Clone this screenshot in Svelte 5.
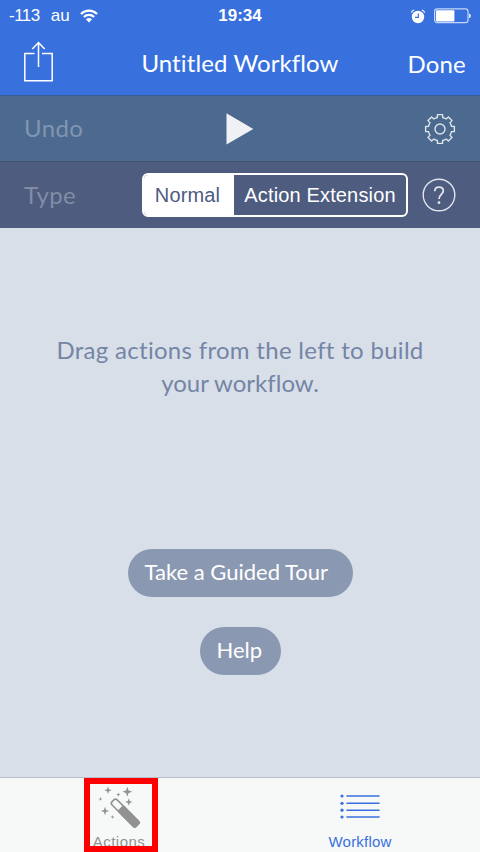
<script>
  let mode = 'Normal';
  const modes = ['Normal', 'Action Extension'];

  // outline of the settings cog, eight teeth around the centre
  const point = (r, deg) => {
    const a = (deg * Math.PI) / 180;
    return `${(16 + r * Math.cos(a)).toFixed(2)} ${(16 + r * Math.sin(a)).toFixed(2)}`;
  };

  let gear = '';
  for (let i = 0; i < 8; i++) {
    const a = i * 45;
    gear += `${i ? 'L' : 'M'}${point(11.8, a - 13)} L${point(14.6, a - 10)} L${point(14.6, a + 10)} L${point(11.8, a + 13)} A11.8 11.8 0 0 1 ${point(11.8, a + 32)} `;
  }
  gear += 'Z';

  // four-pointed stars around the wand: x, y, radius
  const stars = [
    [12, 5.2, 3.7],
    [31.3, 6.8, 5],
    [22.3, 9.6, 2.1],
    [4.4, 14, 2.1],
    [32.8, 17, 3.7],
    [9, 26, 4.3],
    [16.4, 32, 2.1],
  ];

  function star([x, y, r]) {
    const k = r * 0.26;
    return `M${x} ${y - r}L${x + k} ${y - k}L${x + r} ${y}L${x + k} ${y + k}L${x} ${y + r}L${x - k} ${y + k}L${x - r} ${y}L${x - k} ${y - k}Z`;
  }
</script>

<div class="screen">
  <header>
    <div class="status">
      <div class="carrier">
        <span class="signal">-113</span>
        <span class="network">au</span>
        <svg width="18" height="14" viewBox="0 0 20 15">
          <g fill="none" stroke="#fff" stroke-width="2.5">
            <path d="M1.1 5.2C6 .4 14 .4 18.9 5.2" />
            <path d="M4.3 8.6C7.5 5.5 12.5 5.5 15.7 8.6" />
          </g>
          <path d="M6.6 11Q10 8.2 13.4 11L10 14.6Z" fill="#fff" />
        </svg>
      </div>
      <span class="time">19:34</span>
      <div class="power">
        <svg width="16" height="15" viewBox="0 0 16 15">
          <circle cx="8" cy="8" r="6.2" fill="#fff" />
          <path d="M1.3 3.6Q2 1.5 4.2 1M14.7 3.6Q14 1.5 11.8 1" fill="none" stroke="#fff" stroke-width="1.2" />
          <path d="M8.3 4.5V8.3H5" fill="none" stroke="#3871de" stroke-width="1.2" />
        </svg>
        <svg width="38" height="16" viewBox="0 0 38 16">
          <rect x=".6" y=".9" width="33.4" height="13.8" rx="2.6" fill="none" stroke="#c5d6f6" stroke-width="1.2" />
          <rect x="2" y="2.2" width="18.4" height="11.2" rx="1" fill="#fff" />
          <path d="M35 5.4q2 .6 2 2.4t-2 2.4Z" fill="#dce7fb" />
        </svg>
      </div>
    </div>
    <nav>
      <button class="share" aria-label="Share">
        <svg width="30" height="42" viewBox="0 0 30 42" fill="none" stroke="#fff" stroke-width="1.5">
          <path d="M10.5 12.5H.8V39.8H28.2V12.5H18" />
          <path d="M14.5 26V1.8M8.3 8L14.5 1.6L20.7 8" />
        </svg>
      </button>
      <h1>Untitled Workflow</h1>
      <button class="done">Done</button>
    </nav>
  </header>

  <div class="bar toolbar">
    <span class="label undo">Undo</span>
    <svg class="play" width="28" height="32" viewBox="0 0 28 32">
      <path d="M.5 .3L27.3 15.9L.5 31.5Z" fill="#eff1f5" />
    </svg>
    <svg class="gear" width="32" height="32" viewBox="0 0 32 32" fill="none" stroke="#dce3eb" stroke-width="1.4">
      <path d={gear} />
      <circle cx="16" cy="16" r="5" />
    </svg>
  </div>

  <div class="bar types">
    <span class="label type">Type</span>
    <div class="segments">
      {#each modes as item}
        <button class:active={mode === item} on:click={() => (mode = item)}>{item}</button>
      {/each}
    </div>
    <svg class="question" width="34" height="34" viewBox="0 0 34 34" fill="none" stroke="#e2e5ec">
      <circle cx="17" cy="17" r="15.8" stroke-width="1.4" />
      <path d="M12.8 13.3C12.8 10.6 14.5 9.1 17 9.1S21.3 10.6 21.3 12.8C21.3 16.3 17 16.4 17 20.9" stroke-width="1.8" />
      <circle cx="17" cy="24.7" r="1.4" fill="#e2e5ec" stroke="none" />
    </svg>
  </div>

  <main>
    <p><span class="first">Drag actions from the left to build</span><br />your workflow.</p>
    <button class="pill tour">Take a Guided Tour</button>
    <button class="pill help">Help</button>
  </main>

  <footer>
    <button class="tab actions">
      <svg width="46" height="48" viewBox="0 0 46 48" fill="#929292">
        {#each stars as s}
          <path d={star(s)} />
        {/each}
        <g transform="translate(16.8 15.6) rotate(45)">
          <rect x=".2" y="-3.6" width="34" height="7.2" rx="2.4" fill="none" stroke="#929292" stroke-width="1.6" />
          <rect x="10.5" y="-4.4" width="25" height="8.8" rx="2" />
        </g>
      </svg>
      <span>Actions</span>
    </button>
    <button class="tab workflow">
      <svg width="40" height="26" viewBox="0 0 40 26" stroke="#3871de" fill="#3871de">
        {#each [2, 9.3, 16.2, 23] as y}
          <circle cx="2" cy={y} r="1.6" stroke="none" />
          <path d="M7 {y}H39" stroke-width="1.6" stroke-linecap="round" />
        {/each}
      </svg>
      <span>Workflow</span>
    </button>
    <div class="highlight"></div>
  </footer>
</div>

<style>
  :global(body) {
    margin: 0;
  }

  .screen {
    width: 480px;
    height: 852px;
    display: flex;
    flex-direction: column;
    overflow: hidden;
    background: #d9dfe9;
    font-family: Lato, sans-serif;
    font-variant-ligatures: none;
  }

  .screen * {
    box-sizing: border-box;
  }

  svg {
    display: block;
    flex: none;
  }

  button {
    border: 0;
    padding: 0;
    background: none;
    font: inherit;
    color: inherit;
    letter-spacing: inherit;
    white-space: nowrap;
  }

  header {
    height: 95px;
    background: #3871de;
    color: #fff;
  }

  .status {
    height: 32px;
    display: grid;
    grid-template-columns: 1fr auto 1fr;
    align-items: center;
    padding: 0 9px;
    font: 17px/32px "Liberation Sans", sans-serif;
  }

  .carrier,
  .power {
    display: flex;
    align-items: center;
  }

  .signal {
    letter-spacing: -0.5px;
  }

  .network {
    margin: 0 10px 0 11px;
  }

  .time {
    font-weight: bold;
  }

  .power {
    justify-content: flex-end;
    gap: 8px;
    margin-right: -1px;
  }

  nav {
    height: 63px;
    display: grid;
    grid-template-columns: 1fr auto 1fr;
    align-items: center;
    padding: 0 14px 0 24px;
  }

  .share {
    justify-self: start;
    margin-top: -3px;
  }

  h1 {
    margin: -1px 0 0 -10px;
    font-size: 24px;
    font-weight: 400;
    letter-spacing: 0.1px;
    line-height: 32px;
  }

  .done {
    justify-self: end;
    margin-top: -1px;
    font-size: 24px;
    letter-spacing: 0.2px;
  }

  .bar {
    display: flex;
    align-items: center;
    padding-left: 24px;
    font-size: 24px;
  }

  .toolbar {
    height: 67px;
    background: #4c698f;
    border-top: 1px solid #3b5c91;
    border-bottom: 1px solid #405572;
    color: #8195b0;
  }

  .types {
    height: 66px;
    background: #4d5c7f;
    color: #828da5;
  }

  .label {
    letter-spacing: 0.4px;
    padding-bottom: 2px;
  }

  .undo {
    width: 202px;
  }

  .gear {
    margin-left: 169.5px;
  }

  .type {
    width: 118px;
  }

  .segments {
    display: flex;
    width: 266px;
    height: 44px;
    border: 2px solid #fff;
    border-radius: 6px;
    overflow: hidden;
    color: #fff;
    font: 20px "Liberation Sans", sans-serif;
    letter-spacing: 0.15px;
  }

  .segments button {
    flex: 1;
  }

  .segments .active {
    flex: none;
    width: 90px;
    padding-right: 3px;
    background: #fff;
    color: #4d5c7f;
  }

  .question {
    margin-left: 14px;
  }

  main {
    flex: 1;
    display: flex;
    flex-direction: column;
    align-items: center;
    padding-top: 106px;
  }

  p {
    margin: 0 0 150px;
    color: #7485a6;
    font-size: 24px;
    line-height: 32.5px;
    text-align: center;
  }

  .first {
    letter-spacing: 0.3px;
  }

  .pill {
    height: 48px;
    border-radius: 24px;
    background: #8b98b2;
    color: #fff;
    font-size: 22px;
    text-align: left;
    padding: 0 0 3px 17px;
  }

  .tour {
    width: 225px;
    margin-bottom: 30px;
  }

  .help {
    width: 81px;
  }

  footer {
    position: relative;
    height: 75px;
    display: flex;
    background: #f7f8f8;
    border-top: 1px solid #b9bfc8;
    font: 15px/18px "Liberation Sans", sans-serif;
  }

  .tab {
    width: 240px;
    display: flex;
    flex-direction: column;
    align-items: center;
    justify-content: flex-end;
    padding-bottom: 1px;
  }

  .actions {
    color: #929292;
    letter-spacing: 0.5px;
    padding-right: 2px;
  }

  .workflow {
    color: #3871de;
    letter-spacing: 0.2px;
  }

  .workflow svg {
    margin-bottom: 13px;
  }

  .highlight {
    position: absolute;
    left: 84px;
    top: 0;
    width: 74px;
    height: 74px;
    border: 6px solid #f00;
  }
</style>
